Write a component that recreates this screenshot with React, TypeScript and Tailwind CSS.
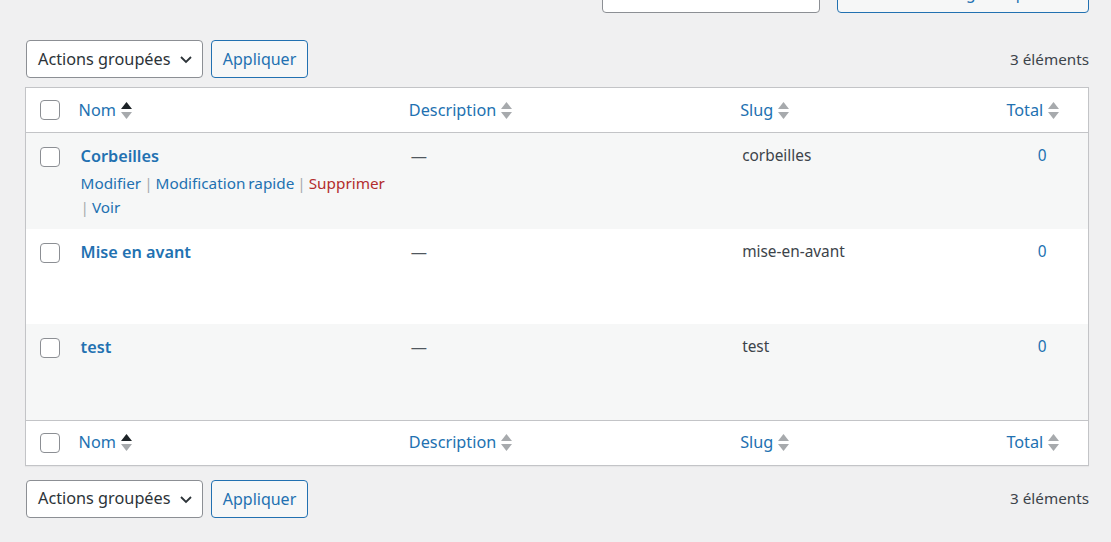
import React from 'react';

const font = { fontFamily: '"Noto Sans", "Open Sans", sans-serif' };

function SortIcon({ active }: { active?: boolean }) {
  return (
    <span className="inline-flex flex-col items-center ml-[5px] gap-[3px] align-middle">
      <svg width="11" height="7" viewBox="0 0 11 7">
        <path d="M5.5 0 L11 7 L0 7 Z" fill={active ? '#1d2327' : '#a7aaad'} />
      </svg>
      <svg width="11" height="7" viewBox="0 0 11 7">
        <path d="M0 0 L11 0 L5.5 7 Z" fill="#a7aaad" />
      </svg>
    </span>
  );
}

function Checkbox() {
  return <span className="block w-[20px] h-[20px] rounded-[4px] border border-[#8c8f94] bg-white" />;
}

function Tablenav() {
  return (
    <div className="flex items-center h-[38px]">
      <div className="flex items-center h-[38px] w-[177px] ml-[1px] pl-[11px] pr-[8px] gap-[6px] border border-[#8c8f94] rounded-[4px] bg-white text-[16.25px] text-[#2c3338]">
        <span>Actions groupées</span>
        <svg width="16" height="16" viewBox="0 0 16 16" className="ml-auto">
          <path d="M3 6 L8 11 L13 6" stroke="#2c3338" strokeWidth="1.8" fill="none" />
        </svg>
      </div>
      <button className="ml-[8px] h-[38px] w-[97px] border border-[#2271b1] rounded-[4px] bg-[#f6f7f7] text-[16px] text-[#2271b1]">
        Appliquer
      </button>
      <span className="ml-auto text-[15.25px] text-[#3c434a]">3 éléments</span>
    </div>
  );
}

function HeaderRow({ top }: { top?: boolean }) {
  const th = 'h-[45px] px-[10px] text-left font-normal text-[16.25px] text-[#2271b1] ' +
    (top ? 'border-b border-[#c3c4c7]' : 'border-t border-[#c3c4c7]');
  return (
    <tr>
      <th className={th + ' !pl-[14px] !pr-0'}><Checkbox /></th>
      <th className={th}><span className="inline-flex items-center">Nom<SortIcon active /></span></th>
      <th className={th}><span className="inline-flex items-center">Description<SortIcon /></span></th>
      <th className={th}><span className="inline-flex items-center">Slug<SortIcon /></span></th>
      <th className={th}><span className="inline-flex items-center">Total<SortIcon /></span></th>
    </tr>
  );
}

const rows = [
  { name: 'Corbeilles', slug: 'corbeilles', show: true, bg: 'bg-[#f6f7f7]' },
  { name: 'Mise en avant', slug: 'mise-en-avant', show: false, bg: 'bg-white' },
  { name: 'test', slug: 'test', show: false, bg: 'bg-[#f6f7f7]' },
];

export default function App() {
  return (
    <div className="min-h-screen bg-[#f0f0f1] text-[#3c434a]" style={font}>
      <div className="ml-[25px] w-[1064px]">
        {/* search box, mostly scrolled off */}
        <div className="h-[13px] overflow-hidden">
          <div className="flex justify-end mt-[-25px] gap-[17px]">
            <div className="w-[218px] h-[38px] border border-[#8c8f94] rounded-[4px] bg-white" />
            <div className="h-[38px] w-[252px] border border-[#2271b1] rounded-[4px] bg-[#f6f7f7] text-[15.5px] text-[#2271b1] flex items-center justify-center">
              Rechercher catégories produits
            </div>
          </div>
        </div>

        <div className="mt-[27px]">
          <Tablenav />
        </div>

        <table className="mt-[9px] w-full table-fixed border-collapse border border-[#c3c4c7] bg-white shadow-[0_1px_1px_rgba(0,0,0,0.04)]">
          <colgroup>
            <col className="w-[43px]" />
            <col className="w-[330px]" />
            <col className="w-[331px]" />
            <col className="w-[266px]" />
            <col className="w-[92px]" />
          </colgroup>
          <thead>
            <HeaderRow top />
          </thead>
          <tbody>
            {rows.map((r) => (
              <tr key={r.name} className={r.bg + ' align-top'}>
                <td className="pt-[14px] pl-[14px]"><Checkbox /></td>
                <td className="px-[12px] pt-[11px] pb-[9px]">
                  <div className="text-[16.25px] leading-[24px] font-semibold text-[#2271b1]">{r.name}</div>
                  <div className={'pt-[2.5px] text-[15.3px] leading-[24.5px] [word-spacing:-1px] ' + (r.show ? '' : 'invisible')}>
                    <span className="text-[#2271b1]">Modifier</span>
                    <span className="text-[#a7aaad]"> | </span>
                    <span className="text-[#2271b1]">Modification rapide</span>
                    <span className="text-[#a7aaad]"> | </span>
                    <span className="text-[#b32d2e]">Supprimer</span>{' '}
                    <span className="whitespace-nowrap">
                      <span className="text-[#a7aaad]">| </span>
                      <span className="text-[#2271b1]">Voir</span>
                    </span>
                  </div>
                </td>
                <td className="px-[12px] pt-[11px] text-[16.25px] leading-[24px] text-[#50575e]">—</td>
                <td className="px-[12px] pt-[11px] text-[15.4px] leading-[24px] text-[#3c434a]">{r.slug}</td>
                <td className="px-[12px] pt-[11px] text-center text-[15.4px] leading-[24px] text-[#2271b1]">0</td>
              </tr>
            ))}
          </tbody>
          <tfoot>
            <HeaderRow />
          </tfoot>
        </table>

        <div className="mt-[14px]">
          <Tablenav />
        </div>
      </div>
    </div>
  );
}
